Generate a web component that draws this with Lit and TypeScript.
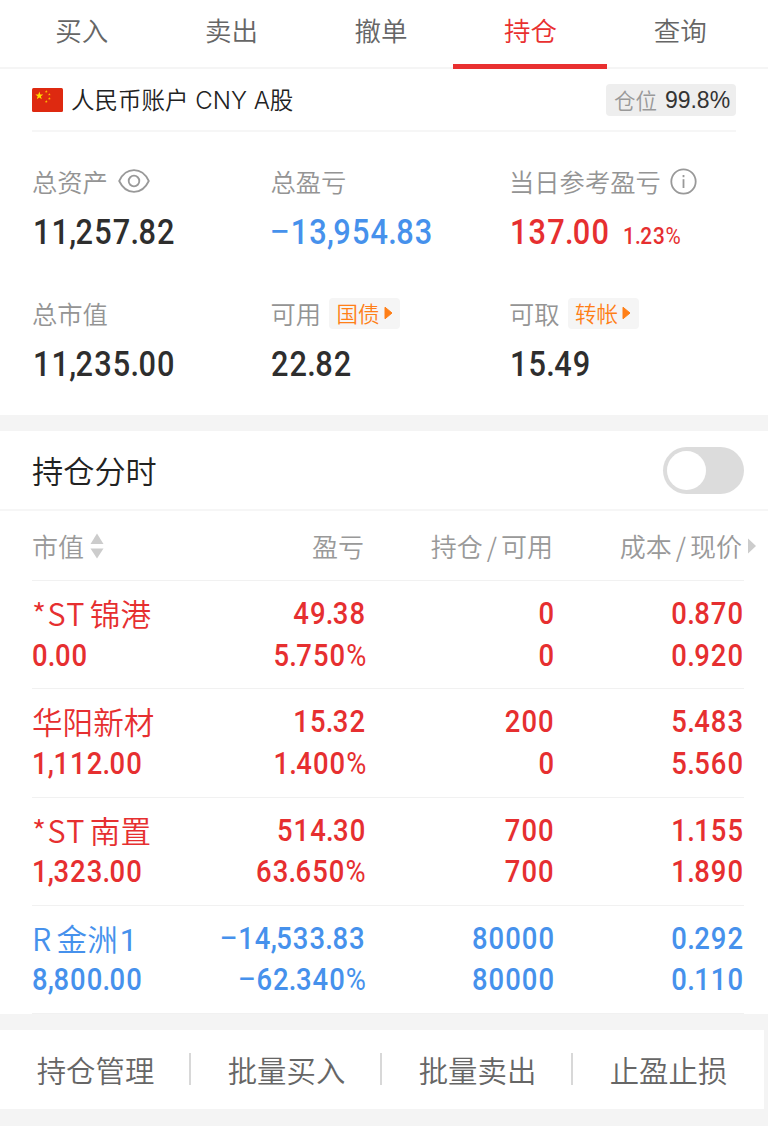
import { LitElement, html, css } from "lit";
import { customElement, property, state } from "lit/decorators.js";
import { classMap } from "lit/directives/class-map.js";

/** Figure set in narrow digits; separators get tighter spacing than digits. */
@customElement("num-text")
class NumText extends LitElement {
  @property() value = "";

  static styles = css`
    :host {
      display: inline-block;
      font-family: "Roboto", "Noto Sans CJK SC", sans-serif;
      font-weight: 500;
      white-space: nowrap;
      transform: scaleX(0.865);
      transform-origin: left center;
      letter-spacing: 0.038em;
    }
    .sep {
      letter-spacing: -0.02em;
      margin-left: -0.03em;
    }
    .minus {
      display: inline-block;
      font-weight: 400;
      letter-spacing: 0;
      margin-right: 0.07em;
      transform: scaleX(1.2);
    }
    .pct {
      font-weight: 400;
      letter-spacing: 0;
    }
  `;

  render() {
    return [...this.value].map((c) => {
      if (c === "." || c === ",") return html`<span class="sep">${c}</span>`;
      if (c === "−") return html`<span class="minus">${c}</span>`;
      if (c === "%") return html`<span class="pct">${c}</span>`;
      return c;
    });
  }
}

interface Holding {
  name: string;
  value: string;
  cells: [string, string][];
  down?: boolean;
}

const TABS = ["买入", "卖出", "撤单", "持仓", "查询"];
const ACTIONS = ["持仓管理", "批量买入", "批量卖出", "止盈止损"];
const HOLDINGS: Holding[] = [
  { name: "*ST锦港", value: "0.00", cells: [["49.38", "5.750%"], ["0", "0"], ["0.870", "0.920"]] },
  { name: "华阳新材", value: "1,112.00", cells: [["15.32", "1.400%"], ["200", "0"], ["5.483", "5.560"]] },
  { name: "*ST南置", value: "1,323.00", cells: [["514.30", "63.650%"], ["700", "700"], ["1.155", "1.890"]] },
  { name: "R金洲1", value: "8,800.00", cells: [["−14,533.83", "−62.340%"], ["80000", "80000"], ["0.292", "0.110"]], down: true },
];

@customElement("app-root")
class AppRoot extends LitElement {
  @state() private active = 3;

  static styles = css`
    :host {
      display: block;
      height: 1126px;
      overflow: hidden;
      background: #f4f4f4;
      color: #2e2e2e;
      font-family: "Noto Sans CJK SC", sans-serif;
      font-weight: 350;
    }
    * { box-sizing: border-box; }
    svg { display: block; flex: none; }
    .tabs {
      display: flex;
      height: 69px;
      padding: 0 13px 0 7px;
      background: #fff;
      border-bottom: 2px solid #f5f5f5;
    }
    .tab {
      flex: 1;
      position: relative;
      text-align: center;
      font-size: 26.5px;
      line-height: 59px;
      color: #666;
    }
    .tab.on { color: #e93030; }
    .tab.on::after {
      content: "";
      position: absolute;
      left: -2.5px;
      right: -2px;
      top: 64px;
      height: 4.5px;
      background: #e93030;
    }
    .summary { background: #fff; height: 346px; padding: 0 32px; }
    .account {
      display: flex;
      align-items: center;
      height: 63px;
      border-bottom: 2px solid #f6f6f6;
    }
    .account-name {
      margin-left: 8px;
      flex: 1;
      font-size: 23.5px;
      line-height: 60px;
      color: #222;
    }
    .latin { font-family: "Inter", sans-serif; font-size: 24px; margin-left: 1.5px; }
    .ratio {
      display: flex;
      align-items: center;
      justify-content: center;
      gap: 8px;
      width: 130px;
      height: 32px;
      border-radius: 4px;
      background: #eee;
      font-size: 21.5px;
      line-height: 31px;
      color: #999;
    }
    .ratio-num {
      font-family: "Liberation Sans", sans-serif;
      font-size: 23px;
      color: #333;
      font-weight: 400;
      padding-top: 1px;
      margin-right: -2px;
    }
    .stats {
      display: grid;
      grid-template-columns: 238.5px 238.5px 1fr;
      grid-auto-rows: 132px;
      padding-top: 29px;
    }
    .label {
      display: flex;
      align-items: center;
      height: 40px;
      font-size: 25.3px;
      line-height: 38px;
      color: #949494;
    }
    .label svg { margin-left: 10px; }
    .label .info { margin-left: 9px; }
    .figure {
      display: flex;
      align-items: baseline;
      height: 60px;
      padding-left: 1px;
      font-size: 35.5px;
      line-height: 63px;
    }
    .figure.flush { padding-left: 0; }
    .small { font-size: 24px; margin-left: -3px; }
    .up { color: #e62f30; }
    .down { color: #4691ec; }
    .tag {
      display: flex;
      align-items: center;
      justify-content: center;
      width: 71px;
      height: 31px;
      margin-left: 8px;
      border-radius: 4px;
      background: #f5f5f5;
      color: #ff7f17;
      font-size: 21.5px;
      line-height: 30px;
    }
    .label .tag svg { margin-left: 4px; }
    .tag-text { margin-top: -1px; }
    .chart-row {
      display: flex;
      align-items: center;
      justify-content: space-between;
      height: 80px;
      margin-top: 16px;
      padding: 0 24px 0 32px;
      background: #fff;
      border-bottom: 2px solid #f6f6f6;
      font-size: 31.2px;
      color: #222;
    }
    .chart-title { margin-top: -2px; }
    .switch {
      width: 81px;
      height: 47px;
      padding: 4px;
      border-radius: 24px;
      background: #dcdcdc;
    }
    .knob { width: 39px; height: 39px; border-radius: 50%; background: #fff; }
    .table { background: #fff; padding: 0 24px 0 32px; height: 503px; }
    .grid {
      display: grid;
      grid-template-columns: 181px 153px 189px 189px;
    }
    .thead {
      height: 70px;
      font-size: 26px;
      line-height: 69px;
      color: #999;
      border-bottom: 1px solid #f1f1f1;
    }
    .th { display: flex; align-items: center; justify-content: flex-end; padding-right: 2px; }
    .th.first { justify-content: flex-start; gap: 6px; }
    .slash { padding: 0 4px; }
    .more { width: 8px; margin: 0 -14px 0 6px; }
    .row {
      height: 108.3px;
      padding-top: 9px;
      border-bottom: 1px solid #f1f1f1;
      font-size: 31.7px;
    }
    .cell { display: flex; flex-direction: column; align-items: flex-end; }
    .cell.first { align-items: flex-start; }
    .line { height: 41.5px; line-height: 41.5px; }
    .cell:not(.first) num-text { transform-origin: right center; }
    .name { font-size: 30.6px; white-space: nowrap; padding-top: 3px; }
    .code { margin-right: 4px; letter-spacing: 1.4px; }
    .digit { font-family: "Roboto", sans-serif; font-weight: 400; font-size: 31px; margin-left: 2px; }
    .actions {
      display: flex;
      width: 764px;
      height: 79px;
      margin-top: 16px;
      background: #fff;
      color: #666;
      font-size: 29.4px;
    }
    .action {
      display: flex;
      align-items: center;
      justify-content: center;
      width: 191px;
      padding-bottom: 1px;
    }
    .action + .action::before {
      content: "";
      width: 2px;
      height: 32px;
      margin: 0 37px 0 -39px;
      background: #d8d8d8;
    }
  `;

  private arrow() {
    return html`<svg width="9" height="14" viewBox="0 0 9 14"><path d="M1 1.2L8 7L1 12.8Z" fill="#ff7f17" stroke="#ff7f17" stroke-linejoin="round" /></svg>`;
  }

  private holdingName(name: string) {
    return name
      .split(/([*A-Z]+|[0-9]+)/)
      .filter(Boolean)
      .map((p) => {
        if (/^[*A-Z]/.test(p)) return html`<span class="code">${p}</span>`;
        if (/^[0-9]/.test(p)) return html`<span class="digit">${p}</span>`;
        return p;
      });
  }

  private star(cx: number, cy: number, r: number) {
    const pts = Array.from({ length: 10 }, (_, i) => {
      const a = (Math.PI * i) / 5 - Math.PI / 2;
      const d = i % 2 ? r * 0.4 : r;
      return `${(cx + d * Math.cos(a)).toFixed(2)},${(cy + d * Math.sin(a)).toFixed(2)}`;
    }).join(" ");
    return pts;
  }

  render() {
    return html`
      <nav class="tabs">
        ${TABS.map((t, i) => html`<div class=${classMap({ tab: true, on: i === this.active })} @click=${() => (this.active = i)}>${t}</div>`)}
      </nav>
      <section class="summary">
        <div class="account">
          <svg width="31" height="24" viewBox="0 0 31 24">
            <rect width="31" height="24" rx="1.5" fill="#de2910" />
            <polygon points=${this.star(7.3, 7.8, 4.2)} fill="#ffde00" />
            <polygon points=${this.star(14.3, 3.6, 1.5)} fill="#ffb800" />
            <polygon points=${this.star(17.4, 6.4, 1.5)} fill="#ffb800" />
            <polygon points=${this.star(17.4, 10.6, 1.5)} fill="#ffb800" />
            <polygon points=${this.star(14.3, 13.6, 1.5)} fill="#ffb800" />
          </svg>
          <div class="account-name">人民币账户 <span class="latin">CNY A</span>股</div>
          <div class="ratio">仓位<span class="ratio-num">99.8%</span></div>
        </div>
        <div class="stats">
          <div>
            <div class="label">总资产
              <svg width="32" height="24" viewBox="0 0 32 24" fill="none" stroke="#999" stroke-width="1.8">
                <path d="M1.2 12C4.6 4.8 9.7 1.2 16 1.2S27.4 4.8 30.8 12C27.4 19.2 22.3 22.8 16 22.8S4.6 19.2 1.2 12Z" stroke-linejoin="round" />
                <circle cx="16" cy="12" r="5.3" />
              </svg>
            </div>
            <div class="figure"><num-text value="11,257.82"></num-text></div>
          </div>
          <div>
            <div class="label">总盈亏</div>
            <div class="figure flush down"><num-text value="−13,954.83"></num-text></div>
          </div>
          <div>
            <div class="label">当日参考盈亏
              <svg class="info" width="27" height="27" viewBox="0 0 27 27" fill="none" stroke="#999" stroke-width="1.8">
                <circle cx="13.5" cy="13.5" r="12.2" />
                <path d="M13.5 11.2V20" />
                <path d="M13.5 7V9.2" />
              </svg>
            </div>
            <div class="figure up"><num-text value="137.00"></num-text><num-text class="small" value="1.23%"></num-text></div>
          </div>
          <div>
            <div class="label">总市值</div>
            <div class="figure"><num-text value="11,235.00"></num-text></div>
          </div>
          <div>
            <div class="label">可用<span class="tag"><span class="tag-text">国债</span>${this.arrow()}</span></div>
            <div class="figure flush"><num-text value="22.82"></num-text></div>
          </div>
          <div>
            <div class="label">可取<span class="tag"><span class="tag-text">转帐</span>${this.arrow()}</span></div>
            <div class="figure"><num-text value="15.49"></num-text></div>
          </div>
        </div>
      </section>
      <section class="chart-row">
        <span class="chart-title">持仓分时</span>
        <div class="switch"><div class="knob"></div></div>
      </section>
      <section class="table">
        <div class="grid thead">
          <div class="th first">市值
            <svg width="14" height="26" viewBox="0 0 14 26" fill="#ccc"><path d="M7 0.5L13.5 11H0.5Z" /><path d="M7 25.5L13.5 15.5H0.5Z" /></svg>
          </div>
          <div class="th">盈亏</div>
          <div class="th">持仓<span class="slash">/</span>可用</div>
          <div class="th">成本<span class="slash">/</span>现价
            <svg class="more" width="8" height="16" viewBox="0 0 8 16" fill="#ccc"><path d="M0 0.5L8 8L0 15.5Z" /></svg>
          </div>
        </div>
        ${HOLDINGS.map(
          (h) => html`<div class=${classMap({ grid: true, row: true, up: !h.down, down: !!h.down })}>
            <div class="cell first">
              <div class="line name">${this.holdingName(h.name)}</div>
              <div class="line"><num-text value=${h.value}></num-text></div>
            </div>
            ${h.cells.map(
              ([a, b]) => html`<div class="cell">
                <div class="line"><num-text value=${a}></num-text></div>
                <div class="line"><num-text value=${b}></num-text></div>
              </div>`
            )}
          </div>`
        )}
      </section>
      <footer class="actions">${ACTIONS.map((a) => html`<div class="action">${a}</div>`)}</footer>
    `;
  }
}
